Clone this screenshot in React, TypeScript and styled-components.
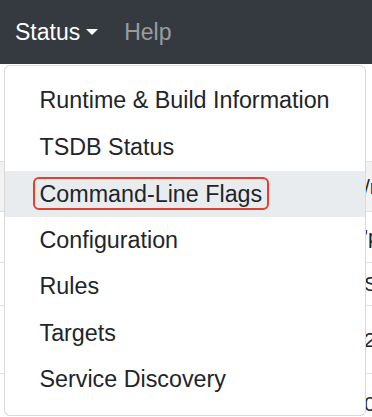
import styled, { createGlobalStyle } from "styled-components";

const GlobalStyle = createGlobalStyle`
  body {
    margin: 0;
    background: #fff;
    font-family: "Liberation Sans", Arial, sans-serif;
    color: #212529;
  }
`;

const Page = styled.div`
  position: relative;
  width: 372px;
  height: 417px;
  overflow: hidden;
`;

const Navbar = styled.nav`
  display: flex;
  align-items: stretch;
  gap: 3px;
  height: 64px;
  padding: 0 3.5px;
  background: #343a40;
`;

const NavItem = styled.div`
  position: relative;
  display: flex;
  align-items: center;
`;

const NavLink = styled.span<{ $active?: boolean; $caret?: boolean }>`
  padding: 0 11.5px;
  font-size: 23px;
  line-height: 34px;
  color: ${p => (p.$active ? "#fff" : "rgba(255, 255, 255, 0.5)")};

  ${p =>
    p.$caret &&
    `
    &::after {
      content: "";
      display: inline-block;
      margin-left: 6px;
      vertical-align: 5px;
      border-top: 6.5px solid;
      border-left: 6.5px solid transparent;
      border-right: 6.5px solid transparent;
    }
  `}
`;

const Menu = styled.div`
  position: absolute;
  top: 65px;
  left: 0.5px;
  z-index: 10;
  box-sizing: border-box;
  width: 362px;
  padding: 11.5px 0;
  background: #fff;
  border: 1px solid rgba(0, 0, 0, 0.15);
  border-radius: 6px;
`;

const MenuItem = styled.div<{ $hover?: boolean }>`
  height: 46.5px;
  display: flex;
  align-items: center;
  padding: 0 34.5px;
  font-size: 23.3px;
  white-space: nowrap;
  color: #212529;
  background: ${p => (p.$hover ? "#e9ecef" : "transparent")};
`;

const Marked = styled.span`
  display: inline-block;
  padding: 1px 5px 0;
  margin: 0 -7px;
  line-height: 28px;
  border: 2px solid #e2412d;
  border-radius: 6px;
`;

const Table = styled.div`
  padding-top: 97px;
`;

const Row = styled.div<{ $h: number; $striped?: boolean }>`
  display: grid;
  grid-template-columns: 364px 1fr;
  align-items: center;
  height: ${p => p.$h}px;
  border-top: 1px solid #dee2e6;
  background: ${p => (p.$striped ? "#f2f2f2" : "#fff")};
  font-size: 21px;
  color: #212529;
`;

const Cell = styled.span`
  white-space: nowrap;
  overflow: hidden;
`;

const rows = [
  { h: 49, striped: true, value: "/m" },
  { h: 50, value: "'p" },
  { h: 42, value: "S" },
  { h: 67, value: "2" },
  { h: 60, value: "0" },
];

const items = [
  "Runtime & Build Information",
  "TSDB Status",
  "Command-Line Flags",
  "Configuration",
  "Rules",
  "Targets",
  "Service Discovery",
];

export default function App() {
  return (
    <Page>
      <GlobalStyle />
      <Navbar>
        <NavItem>
          <NavLink $active $caret>Status</NavLink>
          <Menu>
            {items.map(item =>
              item === "Command-Line Flags" ? (
                <MenuItem key={item} $hover>
                  <Marked>{item}</Marked>
                </MenuItem>
              ) : (
                <MenuItem key={item}>{item}</MenuItem>
              )
            )}
          </Menu>
        </NavItem>
        <NavItem>
          <NavLink>Help</NavLink>
        </NavItem>
      </Navbar>
      <Table>
        {rows.map((r, i) => (
          <Row key={i} $h={r.h} $striped={r.striped}>
            <Cell />
            <Cell>{r.value}</Cell>
          </Row>
        ))}
      </Table>
    </Page>
  );
}
